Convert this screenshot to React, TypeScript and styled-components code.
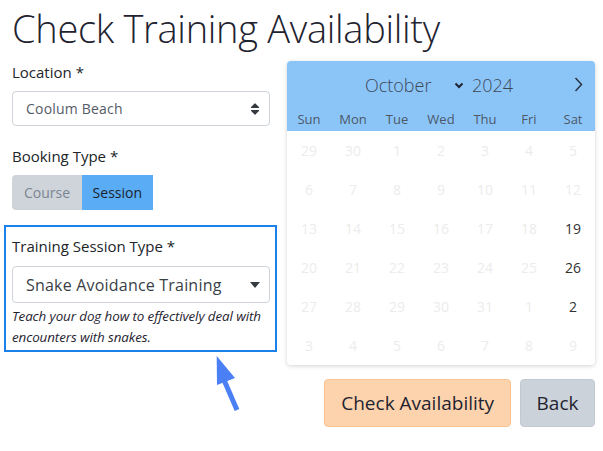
import React from 'react';
import styled, { createGlobalStyle } from 'styled-components';

const GlobalStyle = createGlobalStyle`
  body {
    margin: 0;
    font-family: "Open Sans", "Noto Sans", sans-serif;
    color: #212529;
    background: #fff;
  }
`;

const Page = styled.div`
  position: relative;
  width: 603px;
  height: 451px;
  padding: 0 8px 0 12px;
  box-sizing: border-box;
  overflow: hidden;
`;

const Title = styled.h1`
  margin: 0;
  padding-top: 4px;
  font-size: 38px;
  font-weight: 300;
  line-height: 48px;
  letter-spacing: -0.3px;
  color: #1f2330;
  white-space: nowrap;
`;

const Columns = styled.div`
  display: flex;
  align-items: flex-start;
  gap: 17px;
  margin-top: 9px;
`;

const LeftCol = styled.div`
  width: 258px;
  display: flex;
  flex-direction: column;
`;

const RightCol = styled.div`
  width: 308px;
  display: flex;
  flex-direction: column;
`;

const Field = styled.div`
  margin-bottom: 19px;
`;

const Label = styled.div<{ $space?: number }>`
  font-size: 15px;
  line-height: 22px;
  margin: 0 0 ${(p) => p.$space ?? 8}px;
  color: #212529;
`;

const SelectBox = styled.div<{ $big?: boolean }>`
  display: flex;
  align-items: center;
  justify-content: space-between;
  height: ${(p) => (p.$big ? 37 : 35)}px;
  padding: 0 9px 0 13px;
  border: 1px solid #ced4da;
  border-radius: 4px;
  box-sizing: border-box;
  font-size: ${(p) => (p.$big ? 16 : 14)}px;
  color: ${(p) => (p.$big ? '#3a3f47' : '#555b66')};
  letter-spacing: 0.2px;
`;

const ButtonGroup = styled.div`
  display: flex;
  height: 35px;
  border-radius: 4px;
  overflow: hidden;
  align-self: flex-start;
`;

const ToggleButton = styled.div<{ $active?: boolean }>`
  display: flex;
  align-items: center;
  padding: 0 ${(p) => (p.$active ? 10.5 : 12)}px;
  font-size: 14px;
  background: ${(p) => (p.$active ? '#5aacf5' : '#ced4da')};
  color: ${(p) => (p.$active ? '#1b1f2a' : '#7b8591')};
`;

const Highlight = styled.div`
  margin: -4px -7px 0 -8px;
  padding: 8px 5px 3px 6px;
  border: 2px solid #1a80ea;
`;

const HelpText = styled.div`
  margin-top: 3px;
  font-size: 13.4px;
  font-style: italic;
  line-height: 20.5px;
  letter-spacing: -0.1px;
  color: #1f2330;
`;

const Calendar = styled.div`
  border-radius: 4px;
  overflow: hidden;
  background: #fff;
  box-shadow: 0 1px 4px rgba(0, 0, 0, 0.18);
`;

const CalHeader = styled.div`
  background: #8bc5f8;
`;

const MonthRow = styled.div`
  position: relative;
  display: flex;
  align-items: center;
  justify-content: center;
  height: 46px;
  padding-top: 2px;
  box-sizing: border-box;
  color: #3d4858;
  font-size: 18px;
  font-weight: 300;
`;

const MonthPick = styled.span`
  display: inline-flex;
  align-items: center;
  gap: 6px;
  width: 99px;
  justify-content: space-between;
  margin-left: -4px;
`;

const YearPick = styled.span`
  margin-left: 8px;
`;

const NextButton = styled.span`
  position: absolute;
  right: 12px;
  top: 16px;
  display: flex;
`;

const WeekGrid = styled.div<{ $rowHeight: number }>`
  display: grid;
  grid-template-columns: repeat(7, 44px);
  grid-auto-rows: ${(p) => p.$rowHeight}px;
`;

const DayName = styled.div`
  display: flex;
  align-items: center;
  justify-content: center;
  font-size: 13px;
  color: #4c5868;
`;

const DayCell = styled.div<{ $enabled?: boolean }>`
  display: flex;
  align-items: center;
  justify-content: center;
  font-size: 14px;
  color: ${(p) => (p.$enabled ? '#333' : '#ececec')};
`;

const Actions = styled.div`
  display: flex;
  justify-content: flex-end;
  gap: 9px;
  margin-top: 14px;
`;

const ActionButton = styled.div<{ $variant: 'primary' | 'secondary' }>`
  display: flex;
  align-items: center;
  justify-content: center;
  height: 48px;
  padding: 0 ${(p) => (p.$variant === 'primary' ? 16 : 15.5)}px;
  box-sizing: border-box;
  border-radius: 4px;
  font-size: 19px;
  color: #1f2330;
  background: ${(p) => (p.$variant === 'primary' ? '#fdd3ad' : '#ccd2da')};
  border: 1px solid ${(p) => (p.$variant === 'primary' ? '#f9c393' : '#c3c9d1')};
`;

const Arrow = styled.svg`
  position: absolute;
  left: 210px;
  top: 350px;
`;

const weekDays = ['Sun', 'Mon', 'Tue', 'Wed', 'Thu', 'Fri', 'Sat'];

const days: [number, boolean][] = [
  [29, false], [30, false], [1, false], [2, false], [3, false], [4, false], [5, false],
  [6, false], [7, false], [8, false], [9, false], [10, false], [11, false], [12, false],
  [13, false], [14, false], [15, false], [16, false], [17, false], [18, false], [19, true],
  [20, false], [21, false], [22, false], [23, false], [24, false], [25, false], [26, true],
  [27, false], [28, false], [29, false], [30, false], [31, false], [1, false], [2, true],
  [3, false], [4, false], [5, false], [6, false], [7, false], [8, false], [9, false],
];

function UpDownIcon() {
  return (
    <svg width="10" height="14" viewBox="0 0 10 14">
      <path d="M1.5 5.5 L5 2 L8.5 5.5 Z" fill="#343a40" stroke="#343a40" strokeWidth="1.2" strokeLinejoin="round" />
      <path d="M1.5 8.5 L5 12 L8.5 8.5 Z" fill="#343a40" stroke="#343a40" strokeWidth="1.2" strokeLinejoin="round" />
    </svg>
  );
}

function CaretIcon() {
  return (
    <svg width="10" height="6" viewBox="0 0 10 6">
      <path d="M0 0 H10 L5 6 Z" fill="#343a40" />
    </svg>
  );
}

function App() {
  return (
    <Page>
      <GlobalStyle />
      <Title>Check Training Availability</Title>
      <Columns>
        <LeftCol>
          <Field>
            <Label>Location *</Label>
            <SelectBox>
              Coolum Beach
              <UpDownIcon />
            </SelectBox>
          </Field>
          <Field>
            <Label>Booking Type *</Label>
            <ButtonGroup>
              <ToggleButton>Course</ToggleButton>
              <ToggleButton $active>Session</ToggleButton>
            </ButtonGroup>
          </Field>
          <Highlight>
            <Label $space={9}>Training Session Type *</Label>
            <SelectBox $big>
              Snake Avoidance Training
              <CaretIcon />
            </SelectBox>
            <HelpText>
              Teach your dog how to effectively deal with encounters with snakes.
            </HelpText>
          </Highlight>
        </LeftCol>
        <RightCol>
          <Calendar>
            <CalHeader>
              <MonthRow>
                <MonthPick>
                  October
                  <svg width="10" height="7" viewBox="0 0 10 7">
                    <path d="M1.5 1.5 L5 5 L8.5 1.5" fill="none" stroke="#1d2330" strokeWidth="2" />
                  </svg>
                </MonthPick>
                <YearPick>2024</YearPick>
                <NextButton>
                  <svg width="9" height="15" viewBox="0 0 9 15">
                    <path d="M1.5 1 L7.5 7.5 L1.5 14" fill="none" stroke="#2a3340" strokeWidth="1.5" />
                  </svg>
                </NextButton>
              </MonthRow>
              <WeekGrid $rowHeight={24}>
                {weekDays.map((d) => (
                  <DayName key={d}>{d}</DayName>
                ))}
              </WeekGrid>
            </CalHeader>
            <WeekGrid $rowHeight={39}>
              {days.map(([n, enabled], i) => (
                <DayCell key={i} $enabled={enabled}>
                  {n}
                </DayCell>
              ))}
            </WeekGrid>
          </Calendar>
          <Actions>
            <ActionButton $variant="primary">Check Availability</ActionButton>
            <ActionButton $variant="secondary">Back</ActionButton>
          </Actions>
        </RightCol>
      </Columns>
      <Arrow width="32" height="64" viewBox="0 0 32 64">
        <path d="M6.7 6 L7 35 L25 28 Z" fill="#4a7ff5" />
        <path d="M14 30 L27 60" stroke="#4a7ff5" strokeWidth="5" />
      </Arrow>
    </Page>
  );
}

export default App;
